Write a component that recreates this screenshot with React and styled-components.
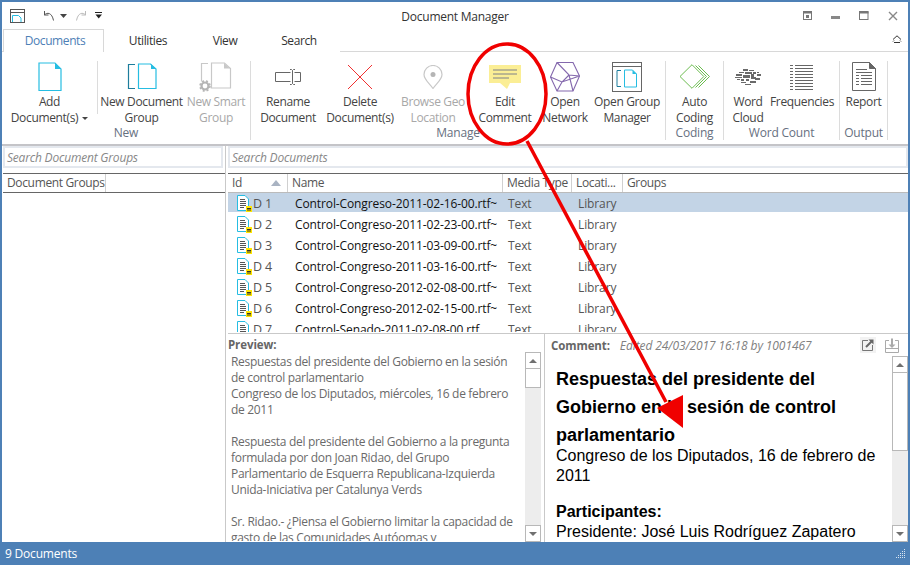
import React from 'react'
import styled, { createGlobalStyle } from 'styled-components'

const Global = createGlobalStyle`
  *, *::before, *::after { margin: 0; padding: 0; box-sizing: border-box; }
  html, body { width: 910px; height: 565px; overflow: hidden; background: #fff; }
  body { font-family: "Open Sans", "Noto Sans", sans-serif; font-size: 12px; color: #444; }
`

const Window = styled.div`
  position: relative;
  width: 910px;
  height: 565px;
  display: flex;
  flex-direction: column;
  background: #fff;
  border: solid #4d80b6;
  border-width: 2px 2px 0 2px;
  overflow: hidden;
`

const TitleBar = styled.div`
  height: 27px;
  flex: none;
  display: grid;
  grid-template-columns: 1fr auto 1fr;
  align-items: center;
`

const QuickBar = styled.div`
  display: flex;
  align-items: center;
  padding-left: 7px;
`

const QuickGap = styled.span`
  width: ${p => p.$w}px;
  flex: none;
`

const WindowTitle = styled.div`
  font-size: 12px;
  letter-spacing: -0.25px;
  color: #333;
  padding-top: 2px;
`

const WindowButtons = styled.div`
  display: flex;
  justify-content: flex-end;
  align-items: center;
  gap: 19px;
  padding-right: 10px;
`

const TabRow = styled.div`
  height: 23px;
  flex: none;
  display: flex;
  align-items: stretch;
  padding-left: 1px;
  border-bottom: 1px solid #d8d8d8;
`

const Tab = styled.div`
  width: ${p => p.$w}px;
  height: 23px;
  display: flex;
  align-items: center;
  justify-content: center;
  padding: 0 0 2px ${p => (p.$active ? 3 : 0)}px;
  letter-spacing: -0.4px;
  color: ${p => (p.$active ? '#4d80b6' : '#333')};
  background: #fff;
  border: solid ${p => (p.$active ? '#d8d8d8' : 'transparent')};
  border-width: 1px 1px 0 1px;
`

const Collapse = styled.div`
  margin-left: auto;
  padding: 0 6px 3px 0;
  display: flex;
  align-items: center;
`

const Ribbon = styled.div`
  height: 94px;
  flex: none;
  display: flex;
  padding-top: 8px;
  border-bottom: 2px solid #c4c4c8;
`

const Group = styled.div`
  width: ${p => p.$w}px;
  flex: none;
  height: 79px;
  display: flex;
  flex-direction: column;
  border-right: 1px solid #dcdcdc;
  margin-top: 1px;
`

const Buttons = styled.div`
  display: flex;
  height: 66px;
`

const RibbonButton = styled.div`
  width: ${p => p.$w}px;
  flex: none;
  display: flex;
  flex-direction: column;
  align-items: center;
  color: ${p => (p.$off ? '#a8a8a8' : '#444')};
  border-right: ${p => (p.$rule ? '1px solid #dcdcdc' : 'none')};
  height: ${p => (p.$rule ? '53px' : 'auto')};
`

const IconSlot = styled.div`
  height: 31px;
  flex: none;
  display: flex;
  align-items: center;
  justify-content: center;
`

const ButtonText = styled.div`
  text-align: center;
  line-height: 16px;
  letter-spacing: -0.35px;
  white-space: nowrap;
  margin-top: 2px;
`

const GroupLabel = styled.div`
  text-align: center;
  line-height: 14px;
  color: #67707f;
  letter-spacing: -0.2px;
  margin-top: -1px;
`

const Caret = styled.span`
  display: inline-block;
  margin-left: 4px;
  vertical-align: 2px;
  border: 3px solid transparent;
  border-top-color: #444;
  border-bottom-width: 0;
`

const Body = styled.div`
  flex: 1;
  min-height: 0;
  display: flex;
`

const LeftPane = styled.div`
  width: 224px;
  flex: none;
  display: flex;
  flex-direction: column;
  padding-left: 1px;
`

const RightPane = styled.div`
  flex: 1;
  min-width: 0;
  display: flex;
  flex-direction: column;
  border-left: 1px solid #c9c9c9;
  margin-left: -1px;
  padding-left: 2px;
`

const SearchBox = styled.div`
  height: 22px;
  flex: none;
  margin: 0 0 3px 0;
  width: ${p => (p.$full ? 'auto' : '220px')};
  border: 2px solid #e4e8ee;
  font-style: italic;
  color: #888;
  letter-spacing: -0.2px;
  padding-left: 2px;
  line-height: 20px;
`

const HeaderRow = styled.div`
  height: 20px;
  flex: none;
  margin-top: 2px;
  display: flex;
  border-top: 1px solid #666;
  border-bottom: 1px solid ${p => (p.$full ? '#bbb' : '#666')};
  width: ${p => (p.$full ? 'auto' : '222px')};
`

const HeaderCell = styled.div`
  width: ${p => p.$w}px;
  flex: ${p => (p.$w ? 'none' : '1')};
  position: relative;
  padding-left: 4px;
  line-height: 18px;
  letter-spacing: -0.35px;
  white-space: nowrap;
  overflow: hidden;
  color: #555;
  border-right: ${p => (p.$last ? 'none' : '1px solid #d0d0d0')};
`

const SortMark = styled.span`
  position: absolute;
  right: 6px;
  top: 6px;
  border: 5px solid transparent;
  border-bottom: 6px solid #a9b3c2;
  border-top-width: 0;
`

const DocList = styled.div`
  height: 139px;
  margin-bottom: 1px;
  flex: none;
  overflow: hidden;
`

const DocRow = styled.div`
  height: 19px;
  margin-bottom: 2px;
  padding-top: 1px;
  display: flex;
  align-items: center;
  background: ${p => (p.$selected ? '#c3d4e6' : 'transparent')};
  letter-spacing: -0.11px;
`

const IdCell = styled.div`
  width: 60px;
  flex: none;
  display: flex;
  align-items: center;
  padding-left: 9px;
  color: #555;
  font-size: 12.5px;
`

const NameCell = styled.div`
  width: 214px;
  flex: none;
  padding-left: 7px;
  color: #111;
  white-space: nowrap;
`

const TypeCell = styled.div`
  width: 76px;
  flex: none;
  padding-left: 6px;
  color: #555;
`

const PlaceCell = styled.div`
  color: #555;
`

const Lower = styled.div`
  flex: 1;
  min-height: 0;
  display: flex;
  border-top: 1px solid #c9c9c9;
`

const PreviewPane = styled.div`
  width: 317px;
  flex: none;
  display: flex;
  flex-direction: column;
  border-right: 1px solid #c9c9c9;
  padding-right: 2px;
`

const PaneHead = styled.div`
  height: ${p => p.$h}px;
  padding-top: ${p => p.$pt || 0}px;
  flex: none;
  display: flex;
  align-items: center;
  color: #666;
  font-size: 11.5px;
  letter-spacing: -0.1px;
`

const PaneName = styled.span`
  font-weight: 700;
`

const Edited = styled.span`
  font-style: italic;
  font-size: 12px;
  color: #808080;
  margin-left: 10px;
  letter-spacing: -0.1px;
`

const HeadTools = styled.div`
  margin-left: auto;
  margin-right: 9px;
  display: flex;
  gap: 9px;
  align-items: center;
`

const PaneBody = styled.div`
  flex: 1;
  min-height: 0;
  display: flex;
`

const PreviewText = styled.div`
  flex: 1;
  min-width: 0;
  overflow: hidden;
  padding: 2px 0 0 3px;
  margin-bottom: 1px;
  line-height: 16px;
  letter-spacing: -0.31px;
  color: #6a6a6a;
  white-space: nowrap;
`

const TextLine = styled.div`
  height: 16px;
`

const Scroll = styled.div`
  width: 16px;
  flex: none;
  display: flex;
  flex-direction: column;
  background: #ededed;
  margin-right: ${p => p.$mr || 0}px;
`

const ScrollEnd = styled.div`
  height: 17px;
  flex: none;
  background: #fff;
  border: 1px solid #b8b8b8;
  display: flex;
  align-items: center;
  justify-content: center;
  &::after {
    content: '';
    border: 4px solid transparent;
    ${p => (p.$up
      ? 'border-bottom: 4px solid #707070; border-top-width: 0;'
      : 'border-top: 4px solid #707070; border-bottom-width: 0;')}
  }
`

const Thumb = styled.div`
  height: ${p => p.$h}px;
  flex: none;
  background: #fff;
  border: 1px solid #b8b8b8;
  border-top: none;
`

const Track = styled.div`
  flex: 1;
`

const CommentPane = styled.div`
  flex: 1;
  min-width: 0;
  display: flex;
  flex-direction: column;
  padding-left: 6px;
`

const CommentText = styled.div`
  flex: 1;
  min-width: 0;
  overflow: hidden;
  padding: 9px 0 0 5px;
  font-family: "Liberation Sans", Arial, sans-serif;
  font-size: 16px;
  line-height: 20px;
  color: #000;
`

const CommentHeading = styled.div`
  font-size: 18px;
  font-weight: 700;
  line-height: 28px;
  margin-bottom: -3px;
`

const CommentBold = styled.div`
  font-weight: 700;
  margin-top: 16px;
  line-height: 20px;
`

const StatusBar = styled.div`
  height: 23px;
  flex: none;
  margin: 0 -2px;
  padding: 0 4px 0 5px;
  background: #4d80b6;
  color: #fff;
  display: flex;
  align-items: center;
  justify-content: space-between;
  letter-spacing: -0.2px;
`

const Annotation = styled.svg`
  position: absolute;
  left: -2px;
  top: -2px;
  pointer-events: none;
`

const AppIcon = () => (
  <svg width="17" height="16" viewBox="0 0 17 16" fill="none">
    <rect x="1.5" y="1.5" width="14" height="13" stroke="#555" />
    <path d="M1.5 4.5h14" stroke="#555" />
    <path d="M3.5 14V7.5h6l2.500 2.500v4" stroke="#26bde2" />
  </svg>
)

const Undo = ({ color }) => (
  <svg width="12" height="12" viewBox="0 0 12 12" fill="none" stroke={color}>
    <path d="M1.500 1v4h4M1.500 5C4 2 9 2.500 10.500 10.500" />
  </svg>
)

const Redo = ({ color }) => (
  <svg width="12" height="12" viewBox="0 0 12 12" fill="none" stroke={color}>
    <path d="M10.500 1v4h-4M10.500 5C8 2 3 2.500 1.500 10.500" />
  </svg>
)

const SmallCaret = () => (
  <svg width="7" height="4" viewBox="0 0 7 4"><path d="M0 0h7L3.500 4z" fill="#444" /></svg>
)

const Customize = () => (
  <svg width="8" height="7" viewBox="0 0 8 7">
    <path d="M0 .5h7" stroke="#222" />
    <path d="M.5 2.500h6.500L3.700 6.500z" fill="#222" />
  </svg>
)

const Restore = () => (
  <svg width="9" height="9" viewBox="0 0 9 9" fill="none">
    <rect x=".5" y=".5" width="8" height="8" stroke="#777" />
    <path d="M0 1.500h9" stroke="#777" strokeWidth="2" />
    <rect x="3" y="4" width="3" height="3" fill="#777" />
  </svg>
)

const Minimize = () => (
  <svg width="9" height="9" viewBox="0 0 9 9"><rect y="5" width="9" height="3" fill="#888" /></svg>
)

const Maximize = () => (
  <svg width="10" height="10" viewBox="0 0 10 10" fill="none">
    <rect x=".5" y=".5" width="8.500" height="8" stroke="#777" />
    <path d="M0 1.500h9.500" stroke="#777" strokeWidth="2" />
  </svg>
)

const CloseX = () => (
  <svg width="10" height="10" viewBox="0 0 10 10"><path d="M1 1l8 8M9 1l-8 8" stroke="#888" strokeWidth="1.400" /></svg>
)

const Chevrons = () => (
  <svg width="10" height="8" viewBox="0 0 10 8" fill="none" stroke="#333">
    <path d="M1 4.500L5 .8l4 3.700M1 6.500l1-1M9 6.500l-1-1M2 7.500h6" />
  </svg>
)

const AddIcon = () => (
  <svg width="24" height="30" viewBox="0 0 24 30">
    <path d="M1 1h16l6 6v21.500H1z" fill="#fff" stroke="#26bde2" strokeWidth="1.200" />
    <path d="M17 1l6 6h-6z" fill="#26bde2" />
  </svg>
)

const GroupIcon = () => (
  <svg width="30" height="28" viewBox="0 0 30 28">
    <path d="M8 1.500H1.500v24H8" fill="none" stroke="#1d7d9c" strokeWidth="1.200" />
    <path d="M11.500 1h12l5.500 5v19.500H11.500z" fill="#fff" stroke="#26bde2" strokeWidth="1.200" />
    <path d="M24 1l5 5h-5z" fill="#26bde2" />
  </svg>
)

const SmartGroupIcon = () => (
  <svg width="34" height="30" viewBox="0 0 34 30">
    <path d="M9 1.500H2.500v18" fill="none" stroke="#c8c8c8" strokeWidth="1.200" />
    <path d="M12.500 1h13l6 5.500v19.500H12.500z" fill="#fff" stroke="#c8c8c8" strokeWidth="1.200" />
    <path d="M25 1l6 5.500h-6z" fill="#c8c8c8" />
    <circle cx="6" cy="24" r="3.500" fill="none" stroke="#b5b5b5" strokeWidth="2.200" />
    <circle cx="6" cy="24" r="5" fill="none" stroke="#b5b5b5" strokeWidth="1.500" strokeDasharray="2 2" />
  </svg>
)

const RenameIcon = () => (
  <svg width="26" height="16" viewBox="0 0 26 16" fill="none" stroke="#666">
    <path d="M15.500 3.500H.5v9h15M19.500 3.500h6v9h-6" />
    <path d="M15 .5h1.500l1 1 1-1H20M17.500 1.500v13M15 15.500h1.500l1-1 1 1H20" />
  </svg>
)

const DeleteIcon = () => (
  <svg width="26" height="26" viewBox="0 0 26 26"><path d="M1 1l24 24M25 1L1 25" stroke="#f03030" /></svg>
)

const PinIcon = () => (
  <svg width="20" height="24" viewBox="0 0 20 24" fill="none">
    <path d="M10 23.500C6 18 1 14.500 1 9.500a9 9 0 0 1 18 0c0 5-5 8.500-9 14z" stroke="#c8c8c8" strokeWidth="1.200" />
    <circle cx="10" cy="9.500" r="2.500" fill="#b5b5b5" />
  </svg>
)

const CommentIcon = () => (
  <svg width="32" height="24" viewBox="0 0 32 24">
    <path d="M0 0h32v18H21l-3 6-7-6H0z" fill="#fbee95" />
    <path d="M4 5h24M4 9h24M4 13h16" stroke="#7f8088" />
  </svg>
)

const NetworkIcon = () => (
  <svg width="30" height="30" viewBox="0 0 30 30" fill="none" stroke="#8468ad" strokeWidth="1.100">
    <path d="M7 .5h16L29.500 14 23 29H7L.5 15z" />
    <path d="M7 .5L19 13l10.500 1M.5 15L12 20l17.500-6M19 13L12 20 7 29M19 13l4 16" />
  </svg>
)

const ManagerIcon = () => (
  <svg width="30" height="30" viewBox="0 0 30 30" fill="none">
    <rect x=".5" y=".5" width="29" height="29" stroke="#666" />
    <path d="M0 4.500h30" stroke="#666" />
    <path d="M9 8.500H5v16h4" stroke="#1d7d9c" />
    <path d="M12.500 8h8l4 4v13h-12z" stroke="#26bde2" />
    <path d="M20.500 8l4 4h-4z" fill="#26bde2" />
  </svg>
)

const AutoCodingIcon = () => (
  <svg width="31" height="25" viewBox="0 0 31 25" fill="none" stroke="#6cbc50">
    <path d="M13 .7L24.800 12.500 13 24.300 1 12.500z" />
    <path d="M16.500 1.500l11 11-11 11M19.500 1.500l11 11-11 11" />
  </svg>
)

const cloudBlocks = [
  [8, 1, 5, 2], [14, 2, 5, 1], [4, 4, 5, 1], [10, 4, 7, 2], [18, 4, 3, 2], [22, 4, 2, 1], [1, 6, 6, 2],
  [8, 7, 7, 3], [16, 6, 3, 3], [22, 6, 4, 2], [0, 9, 7, 1], [2, 11, 3, 1], [6, 11, 3, 2], [11, 11, 3, 2],
  [16, 9, 5, 2], [20, 10, 5, 2], [6, 14, 5, 1], [15, 13, 6, 2], [10, 16, 6, 1],
]

const CloudIcon = () => (
  <svg width="27" height="18" viewBox="0 0 27 18" fill="#6a6a6a">
    {cloudBlocks.map(([x, y, w, h], i) => <rect key={i} x={x} y={y} width={w} height={h} />)}
  </svg>
)

const FrequencyIcon = () => (
  <svg width="24" height="26" viewBox="0 0 24 26" stroke="#666">
    {[1, 4, 7, 10, 13, 16, 19, 22, 25].map(y => (
      <g key={y}>
        <path d={`M0 ${y + 0.5}h3`} />
        <path d={`M5 ${y + 0.5}h18`} />
      </g>
    ))}
  </svg>
)

const ReportIcon = () => (
  <svg width="24" height="29" viewBox="0 0 24 29" fill="none" stroke="#666">
    <path d="M.5.5h17l6 6v22H.5z" />
    <path d="M17.500.5l6 6h-6z" fill="#666" />
    <path d="M4 7.500h11M4 10.500h16M4 13.500h3M9 13.500h11M4 16.500h3M9 16.500h11M4 19.500h3M9 19.500h11M4 22.500h3M9 22.500h11" />
  </svg>
)

const RowIcon = () => (
  <svg width="16" height="17" viewBox="0 0 16 17" style={{ flex: 'none' }}>
    <path d="M.5.5h7.500l3.500 3.500v11.500H.5z" fill="#fff" stroke="#26bde2" />
    <path d="M3 4.500h5M3 6.500h6M3 8.500h6M3 10.500h6M3 12.500h4" stroke="#555" />
    <rect x="9" y="11" width="6" height="6" fill="#ffe600" />
    <path d="M10 13.500h4M10 15h4" stroke="#333" />
  </svg>
)

const PopoutIcon = () => (
  <svg width="16" height="16" viewBox="0 0 16 16" fill="none">
    <rect width="16" height="16" fill="#f2f2f2" />
    <path d="M8 3.500H2.500v10h10V8" stroke="#777" />
    <path d="M6 10l6-6" stroke="#666" strokeWidth="2" />
    <path d="M8.500 2.500h5v5z" fill="#666" />
  </svg>
)

const SaveIcon = () => (
  <svg width="14" height="15" viewBox="0 0 14 15" fill="none" stroke="#aaa">
    <path d="M4 2.500H.5v12h13v-12H10M.5 10.500h13" />
    <path d="M7 .5v7" strokeWidth="2" />
    <path d="M3.500 6.500h7L7 10z" fill="#aaa" stroke="none" />
  </svg>
)

const ribbon = [
  { w: 249, label: 'New', buttons: [
    { w: 96, icon: <AddIcon />, text: ['Add', 'Document(s)'], caret: true, rule: true },
    { w: 87, icon: <GroupIcon />, text: ['New Document', 'Group'] },
    { w: 62, icon: <SmartGroupIcon />, text: ['New Smart', 'Group'], off: true },
  ] },
  { w: 415, label: 'Manage', buttons: [
    { w: 74, icon: <RenameIcon />, text: ['Rename', 'Document'] },
    { w: 70, icon: <DeleteIcon />, text: ['Delete', 'Document(s)'] },
    { w: 76, icon: <PinIcon />, text: ['Browse Geo', 'Location'], off: true },
    { w: 68, icon: <CommentIcon />, text: ['Edit', 'Comment'] },
    { w: 52, icon: <NetworkIcon />, text: ['Open', 'Network'] },
    { w: 72, icon: <ManagerIcon />, text: ['Open Group', 'Manager'] },
  ] },
  { w: 58, label: 'Coding', buttons: [
    { w: 57, icon: <AutoCodingIcon />, text: ['Auto', 'Coding'] },
  ] },
  { w: 116, label: 'Word Count', buttons: [
    { w: 48, icon: <CloudIcon />, text: ['Word', 'Cloud'] },
    { w: 60, icon: <FrequencyIcon />, text: ['Frequencies'] },
  ] },
  { w: 48, label: 'Output', buttons: [
    { w: 47, icon: <ReportIcon />, text: ['Report'] },
  ] },
]

const docs = [
  ['D 1', 'Control-Congreso-2011-02-16-00.rtf~'],
  ['D 2', 'Control-Congreso-2011-02-23-00.rtf~'],
  ['D 3', 'Control-Congreso-2011-03-09-00.rtf~'],
  ['D 4', 'Control-Congreso-2011-03-16-00.rtf~'],
  ['D 5', 'Control-Congreso-2012-02-08-00.rtf~'],
  ['D 6', 'Control-Congreso-2012-02-15-00.rtf~'],
  ['D 7', 'Control-Senado-2011-02-08-00.rtf'],
]

const previewLines = [
  'Respuestas del presidente del Gobierno en la sesión',
  'de control parlamentario',
  'Congreso de los Diputados, miércoles, 16 de febrero',
  'de 2011',
  '',
  'Respuesta del presidente del Gobierno a la pregunta',
  'formulada por don Joan Ridao, del Grupo',
  'Parlamentario de Esquerra Republicana-Izquierda',
  'Unida-Iniciativa per Catalunya Verds',
  '',
  'Sr. Ridao.- ¿Piensa el Gobierno limitar la capacidad de',
  'gasto de las Comunidades Autóomas y',
]

function Scrollbar({ thumb, mr }) {
  return (
    <Scroll $mr={mr}>
      <ScrollEnd $up />
      <Thumb $h={thumb} />
      <Track />
      <ScrollEnd />
    </Scroll>
  )
}

export default function App() {
  return (
    <>
      <Global />
      <Window>
        <TitleBar>
          <QuickBar>
            <AppIcon />
            <QuickGap $w={17} />
            <Undo color="#555" />
            <QuickGap $w={5} />
            <SmallCaret />
            <QuickGap $w={8} />
            <Redo color="#bbb" />
            <QuickGap $w={8} />
            <Customize />
          </QuickBar>
          <WindowTitle>Document Manager</WindowTitle>
          <WindowButtons>
            <Restore />
            <Minimize />
            <Maximize />
            <CloseX />
          </WindowButtons>
        </TitleBar>

        <TabRow>
          <Tab $w={101} $active>Documents</Tab>
          <Tab $w={88}>Utilities</Tab>
          <Tab $w={66}>View</Tab>
          <Tab $w={82}>Search</Tab>
          <Collapse><Chevrons /></Collapse>
        </TabRow>

        <Ribbon>
          {ribbon.map(group => (
            <Group key={group.label} $w={group.w}>
              <Buttons>
                {group.buttons.map(b => (
                  <RibbonButton key={b.text[0]} $w={b.w} $off={b.off} $rule={b.rule}>
                    <IconSlot>{b.icon}</IconSlot>
                    <ButtonText>
                      {b.text.map((line, i) => (
                        <div key={line}>
                          {line}
                          {b.caret && i === 1 && <Caret />}
                        </div>
                      ))}
                    </ButtonText>
                  </RibbonButton>
                ))}
              </Buttons>
              <GroupLabel>{group.label}</GroupLabel>
            </Group>
          ))}
        </Ribbon>

        <Body>
          <LeftPane>
            <SearchBox>Search Document Groups</SearchBox>
            <HeaderRow>
              <HeaderCell $w={103}>Document Groups</HeaderCell>
              <HeaderCell $last />
            </HeaderRow>
          </LeftPane>

          <RightPane>
            <SearchBox $full>Search Documents</SearchBox>
            <HeaderRow $full>
              <HeaderCell $w={60}>Id<SortMark /></HeaderCell>
              <HeaderCell $w={215}>Name</HeaderCell>
              <HeaderCell $w={69}>Media Type</HeaderCell>
              <HeaderCell $w={51}>Locati...</HeaderCell>
              <HeaderCell $last>Groups</HeaderCell>
            </HeaderRow>
            <DocList>
              {docs.map(([id, name], i) => (
                <DocRow key={id} $selected={i === 0}>
                  <IdCell><RowIcon />{id}</IdCell>
                  <NameCell>{name}</NameCell>
                  <TypeCell>Text</TypeCell>
                  <PlaceCell>Library</PlaceCell>
                </DocRow>
              ))}
            </DocList>
            <Lower>
              <PreviewPane>
                <PaneHead $h={18} $pt={2}><PaneName>Preview:</PaneName></PaneHead>
                <PaneBody>
                  <PreviewText>
                    {previewLines.map((line, i) => <TextLine key={i}>{line}</TextLine>)}
                  </PreviewText>
                  <Scrollbar thumb={19} mr={1} />
                </PaneBody>
              </PreviewPane>
              <CommentPane>
                <PaneHead $h={22}>
                  <PaneName>Comment:</PaneName>
                  <Edited>Edited 24/03/2017 16:18 by 1001467</Edited>
                  <HeadTools>
                    <PopoutIcon />
                    <SaveIcon />
                  </HeadTools>
                </PaneHead>
                <PaneBody>
                  <CommentText>
                    <CommentHeading>
                      Respuestas del presidente del<br />
                      Gobierno en la sesión de control<br />
                      parlamentario
                    </CommentHeading>
                    Congreso de los Diputados, 16 de febrero de<br />
                    2011
                    <CommentBold>Participantes:</CommentBold>
                    Presidente: José Luis Rodríguez Zapatero
                  </CommentText>
                  <Scrollbar thumb={78} />
                </PaneBody>
              </CommentPane>
            </Lower>
          </RightPane>
        </Body>

        <StatusBar>
          <span>9 Documents</span>
          <svg width="11" height="11" viewBox="0 0 11 11" fill="#d8e4f0">
            {[[9, 1], [7, 3], [9, 3], [5, 5], [7, 5], [9, 5], [3, 7], [5, 7], [7, 7], [9, 7], [1, 9], [3, 9], [5, 9], [7, 9], [9, 9]]
              .map(([x, y]) => <rect key={`${x}-${y}`} x={x} y={y} width="1" height="1" />)}
          </svg>
        </StatusBar>

        <Annotation width="910" height="565" viewBox="0 0 910 565" fill="none">
          <ellipse cx="507" cy="94" rx="39" ry="50" stroke="#f00000" strokeWidth="3.500" />
          <path d="M527 141L666 402" stroke="#f00000" strokeWidth="3.500" />
          <path d="M657 408L683 395V428z" fill="#f00000" />
        </Annotation>
      </Window>
    </>
  )
}
